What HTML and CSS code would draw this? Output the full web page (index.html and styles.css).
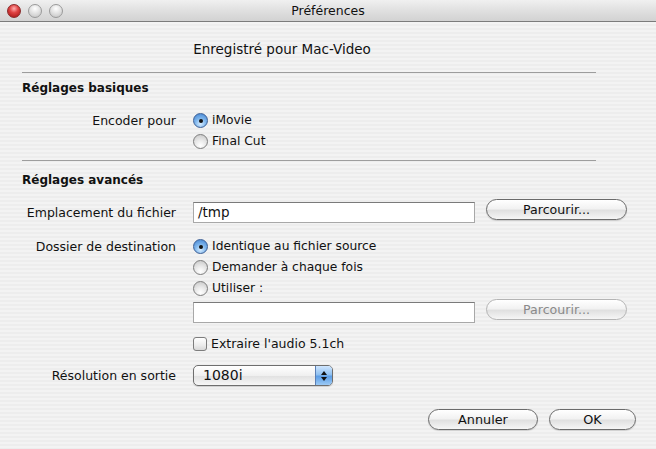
FILE: index.html
```html
<!DOCTYPE html>
<html lang="fr">
<head>
<meta charset="utf-8">
<title>Préférences</title>
<link rel="stylesheet" href="styles.css">
</head>
<body>
<div class="window">
  <div class="titlebar">
    <div class="lights">
      <span class="light red"></span>
      <span class="light"></span>
      <span class="light"></span>
    </div>
    <div class="title">Préférences</div>
  </div>
  <div class="content">
    <div class="registered">Enregistré pour Mac-Video</div>
    <div class="sep"></div>
    <div class="heading h-basic">Réglages basiques</div>
    <div class="row row-encoder">
      <div class="label">Encoder pour</div>
      <div class="controls">
        <label class="option"><span class="radio on"></span>iMovie</label>
        <label class="option"><span class="radio"></span>Final Cut</label>
      </div>
    </div>
    <div class="sep sep2"></div>
    <div class="heading h-adv">Réglages avancés</div>
    <div class="row row-file">
      <div class="label">Emplacement du fichier</div>
      <div class="controls inline">
        <div class="field">/tmp</div>
        <div class="button browse">Parcourir...</div>
      </div>
    </div>
    <div class="row row-dest">
      <div class="label">Dossier de destination</div>
      <div class="controls">
        <label class="option"><span class="radio on"></span>Identique au fichier source</label>
        <label class="option"><span class="radio"></span>Demander à chaque fois</label>
        <label class="option"><span class="radio"></span>Utiliser :</label>
      </div>
    </div>
    <div class="row row-use">
      <div class="label"></div>
      <div class="controls inline">
        <div class="field"></div>
        <div class="button browse disabled">Parcourir...</div>
      </div>
    </div>
    <div class="row row-check">
      <div class="label"></div>
      <div class="controls">
        <label class="option check-option"><span class="check"></span>Extraire l'audio 5.1ch</label>
      </div>
    </div>
    <div class="row row-res">
      <div class="label">Résolution en sortie</div>
      <div class="controls">
        <div class="popup"><span class="popup-text">1080i</span><span class="popup-arrows"><svg width="8" height="12" viewBox="0 0 8 12"><path d="M4 1 L7 5 L1 5 Z" fill="#111"/><path d="M4 11 L7 7 L1 7 Z" fill="#111"/></svg></span></div>
      </div>
    </div>
    <div class="actions">
      <div class="button cancel">Annuler</div>
      <div class="button ok">OK</div>
    </div>
  </div>
</div>
</body>
</html>
```

FILE: styles.css
```css
html, body {
  margin: 0;
  padding: 0;
}
body {
  width: 656px;
  height: 449px;
  overflow: hidden;
  font-family: "DejaVu Sans", "Liberation Sans", sans-serif;
  font-size: 12.5px;
  color: #111;
}
.window {
  width: 656px;
  height: 449px;
  background: repeating-linear-gradient(to bottom, #ededed 0, #ededed 2px, #f3f3f3 2px, #f3f3f3 4px);
}
.titlebar {
  height: 21px;
  border-bottom: 1px solid #7b7b7b;
  background: linear-gradient(to bottom, #f0f0f0 0%, #e0e0e0 50%, #d2d2d2 100%);
  display: flex;
  align-items: center;
  position: relative;
}
.lights {
  display: flex;
  gap: 7px;
  padding-left: 7px;
}
.light {
  width: 12px;
  height: 12px;
  border-radius: 50%;
  border: 1px solid #9a9a9a;
  background: radial-gradient(circle at 50% 30%, #ffffff 0%, #e6e6e6 40%, #c0c0c0 100%);
}
.light.red {
  border-color: #8a2a2a;
  background: radial-gradient(circle at 50% 30%, #ffb0b0 0%, #e04444 40%, #a01010 100%);
}
.title {
  position: absolute;
  left: 0;
  right: 0;
  top: 0;
  line-height: 22px;
  text-align: center;
  font-size: 12.5px;
  pointer-events: none;
}
.content {
  padding: 0 22px;
}
.registered {
  margin-top: 19px;
  line-height: 16px;
  width: 520px;
  text-align: center;
  font-size: 13.5px;
}
.sep {
  margin-top: 15px;
  width: 574px;
  height: 1px;
  background: #9d9d9d;
}
.sep2 {
  margin-top: 8px;
}
.heading {
  font-weight: bold;
  font-size: 12px;
  line-height: 16px;
  margin-top: 7px;
}
.h-adv {
  margin-top: 11px;
}
.row {
  display: grid;
  grid-template-columns: 154px 1fr;
  column-gap: 17px;
  align-items: start;
}
.label {
  text-align: right;
  line-height: 21px;
}
.controls {
  display: flex;
  flex-direction: column;
}
.controls.inline {
  flex-direction: row;
  align-items: flex-start;
  gap: 12px;
}
.option {
  display: flex;
  align-items: center;
  line-height: 21px;
  gap: 4px;
  font-size: 12.3px;
}
.check-option {
  font-size: 12.5px;
}
.radio {
  width: 13px;
  height: 13px;
  border-radius: 50%;
  border: 1px solid #7d7d7d;
  background: radial-gradient(circle at 50% 80%, #ffffff 0%, #e8e8e8 45%, #c4c4c4 100%);
  box-sizing: content-box;
  position: relative;
  flex: none;
}
.radio.on {
  border-color: #3b5f96;
  background: radial-gradient(circle at 50% 75%, #d6ecff 0%, #7fb6ec 45%, #3d7fcf 100%);
}
.radio.on::after {
  content: "";
  position: absolute;
  left: 4.5px;
  top: 4.5px;
  width: 4px;
  height: 4px;
  border-radius: 50%;
  background: #111;
}
.check {
  width: 12px;
  height: 12px;
  border: 1px solid #7d7d7d;
  border-radius: 3px;
  background: linear-gradient(to bottom, #ffffff 0%, #ececec 60%, #d8d8d8 100%);
  flex: none;
}
.row-encoder {
  margin-top: 14px;
}
.row-file {
  margin-top: 11px;
}
.row-file .label {
  line-height: 28px;
}
.field {
  width: 276px;
  height: 19px;
  margin-top: 3px;
  background: #fff;
  border: 1px solid #a8a8a8;
  border-top-color: #7a7a7a;
  line-height: 19px;
  padding-left: 4px;
  box-sizing: content-box;
  font-size: 13.5px;
}
.controls.inline .browse {
  margin-left: -1px;
}
.button {
  height: 19px;
  line-height: 19px;
  border: 1px solid #6b6b6b;
  border-radius: 11px;
  background: linear-gradient(to bottom, #ffffff 0%, #f2f2f2 45%, #e0e0e0 55%, #f6f6f6 100%);
  text-align: center;
  box-shadow: 0 1px 1px rgba(0,0,0,0.15);
  font-size: 12.6px;
}
.browse {
  width: 139px;
}
.button.disabled {
  color: #8a8a8a;
  border-color: #b4b4b4;
  box-shadow: none;
}
.row-dest {
  margin-top: 9px;
}
.row-use {
  margin-top: 0;
}
.row-check {
  margin-top: 10px;
}
.row-res {
  margin-top: 11px;
}
.popup {
  width: 138px;
  height: 19px;
  border: 1px solid #6e6e6e;
  border-radius: 5px;
  display: flex;
  overflow: hidden;
  background: linear-gradient(to bottom, #ffffff 0%, #f0f0f0 50%, #e2e2e2 55%, #f7f7f7 100%);
  box-shadow: 0 1px 1px rgba(0,0,0,0.15);
}
.popup-text {
  flex: 1;
  line-height: 19px;
  padding-left: 9px;
  font-size: 14px;
}
.popup-arrows {
  width: 16px;
  display: flex;
  align-items: center;
  justify-content: center;
  border-left: 1px solid #5a7fb5;
  background: linear-gradient(to bottom, #cfe6ff 0%, #8fc0f0 45%, #5d9ee6 55%, #9ccaf5 100%);
}
.actions {
  display: flex;
  justify-content: flex-end;
  gap: 11px;
  margin-top: 23px;
  margin-right: -2px;
}
.cancel {
  width: 108px;
  font-size: 12.8px;
}
.ok {
  width: 85px;
  font-size: 12.8px;
}
```
